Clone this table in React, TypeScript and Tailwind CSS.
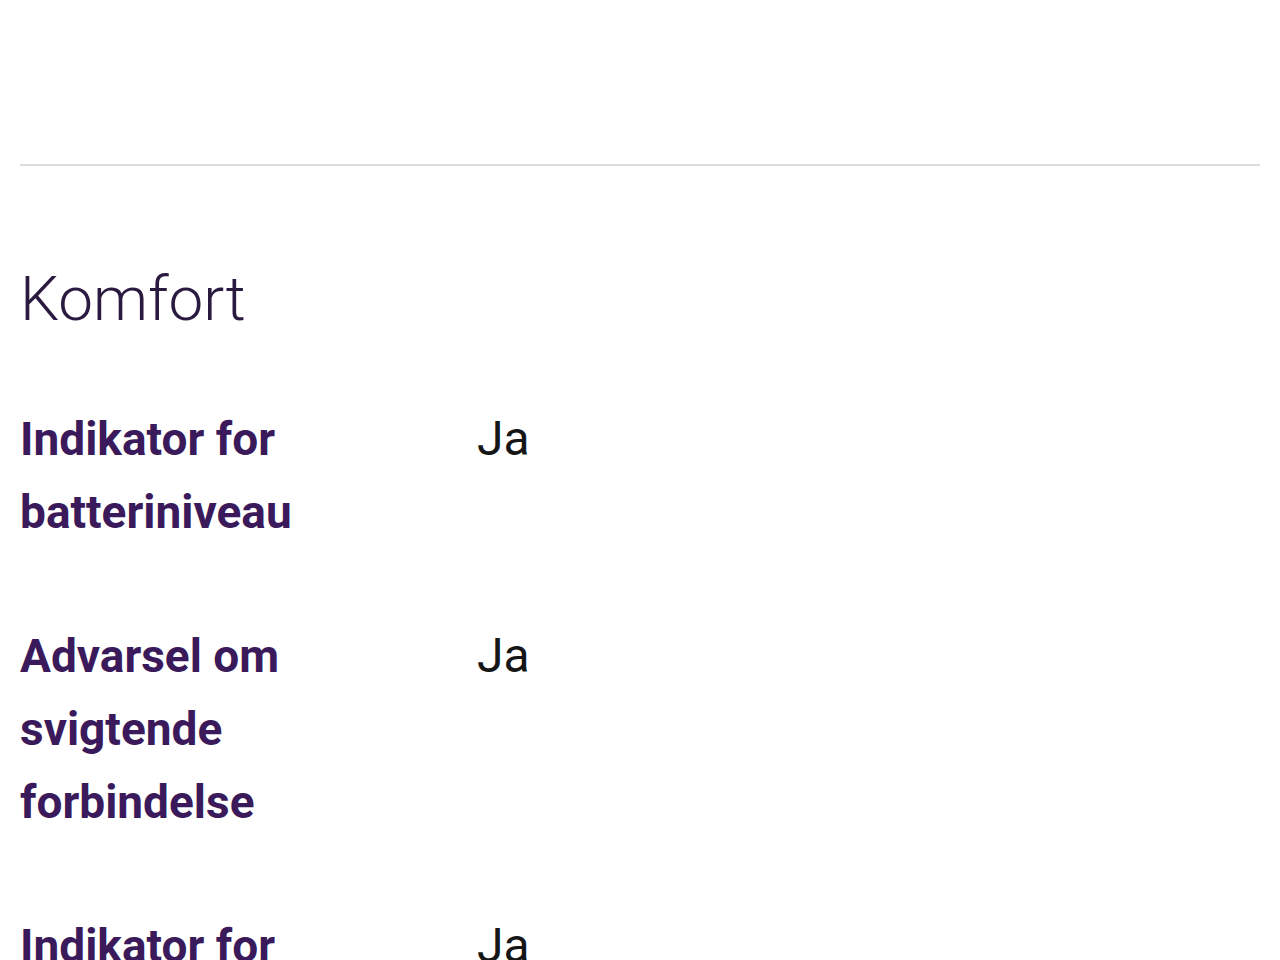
const ROWS: { label: string; value: string }[] = [
  { label: "Indikator for batteriniveau", value: "Ja" },
  { label: "Advarsel om svigtende forbindelse", value: "Ja" },
  { label: "Indikator for signalstyrke", value: "Ja" },
];

function SpecRow({ label, value }: { label: string; value: string }) {
  return (
    <div className="grid grid-cols-[457px_1fr] items-baseline">
      <div className="pr-8 text-[46px] leading-[73px] font-bold text-[#3a1a5a]">{label}</div>
      <div className="text-[48px] leading-[73px] font-normal text-[#161616]">{value}</div>
    </div>
  );
}

export default function App() {
  return (
    <div className="min-h-screen overflow-hidden bg-white px-5 font-['Roboto',sans-serif]">
      <div className="h-[164px]" />
      <div className="border-t-2 border-[#dcdcdc]" />

      <h2 className="mt-[93px] text-[62px] leading-[79px] font-light text-[#2b1a40]">Komfort</h2>

      <div className="mt-[64px] flex flex-col gap-[70px]">
        {ROWS.map((r) => (
          <SpecRow key={r.label} label={r.label} value={r.value} />
        ))}
      </div>
    </div>
  );
}
